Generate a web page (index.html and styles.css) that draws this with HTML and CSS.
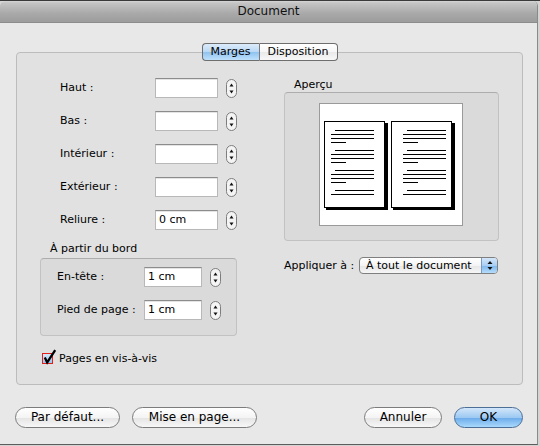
FILE: index.html
```html
<!DOCTYPE html>
<html lang="fr">
<head>
<meta charset="utf-8">
<title>Document</title>
<link rel="stylesheet" href="styles.css">
</head>
<body>
<div class="window">
  <div class="titlebar">Document</div>
  <div class="content">
    <div class="tabs">
      <span class="seg seg-on">Marges</span><span class="seg seg-off">Disposition</span>
    </div>
    <div class="tabbox">
      <div class="left">
        <div class="fields">
          <div class="row"><span class="lbl">Haut :</span><span class="field"></span><span class="stepper"><svg width="11" height="19" viewBox="0 0 11 19"><rect x="0.5" y="0.5" width="10" height="18" rx="5" class="st-bg"/><polygon points="3.5,7.5 7.5,7.5 5.5,4.5" fill="#111"/><polygon points="3.5,11.5 7.5,11.5 5.5,14.5" fill="#111"/></svg></span></div>
          <div class="row"><span class="lbl">Bas :</span><span class="field"></span><span class="stepper"><svg width="11" height="19" viewBox="0 0 11 19"><rect x="0.5" y="0.5" width="10" height="18" rx="5" class="st-bg"/><polygon points="3.5,7.5 7.5,7.5 5.5,4.5" fill="#111"/><polygon points="3.5,11.5 7.5,11.5 5.5,14.5" fill="#111"/></svg></span></div>
          <div class="row"><span class="lbl">Intérieur :</span><span class="field"></span><span class="stepper"><svg width="11" height="19" viewBox="0 0 11 19"><rect x="0.5" y="0.5" width="10" height="18" rx="5" class="st-bg"/><polygon points="3.5,7.5 7.5,7.5 5.5,4.5" fill="#111"/><polygon points="3.5,11.5 7.5,11.5 5.5,14.5" fill="#111"/></svg></span></div>
          <div class="row"><span class="lbl">Extérieur :</span><span class="field"></span><span class="stepper"><svg width="11" height="19" viewBox="0 0 11 19"><rect x="0.5" y="0.5" width="10" height="18" rx="5" class="st-bg"/><polygon points="3.5,7.5 7.5,7.5 5.5,4.5" fill="#111"/><polygon points="3.5,11.5 7.5,11.5 5.5,14.5" fill="#111"/></svg></span></div>
          <div class="row"><span class="lbl">Reliure :</span><span class="field">0 cm</span><span class="stepper"><svg width="11" height="19" viewBox="0 0 11 19"><rect x="0.5" y="0.5" width="10" height="18" rx="5" class="st-bg"/><polygon points="3.5,7.5 7.5,7.5 5.5,4.5" fill="#111"/><polygon points="3.5,11.5 7.5,11.5 5.5,14.5" fill="#111"/></svg></span></div>
        </div>
        <div class="grp-title">À partir du bord</div>
        <div class="group edge">
          <div class="row"><span class="lbl lbl-edge">En-tête :</span><span class="field field-edge">1 cm</span><span class="stepper"><svg width="11" height="19" viewBox="0 0 11 19"><rect x="0.5" y="0.5" width="10" height="18" rx="5" class="st-bg"/><polygon points="3.5,7.5 7.5,7.5 5.5,4.5" fill="#111"/><polygon points="3.5,11.5 7.5,11.5 5.5,14.5" fill="#111"/></svg></span></div>
          <div class="row"><span class="lbl lbl-edge">Pied de page :</span><span class="field field-edge">1 cm</span><span class="stepper"><svg width="11" height="19" viewBox="0 0 11 19"><rect x="0.5" y="0.5" width="10" height="18" rx="5" class="st-bg"/><polygon points="3.5,7.5 7.5,7.5 5.5,4.5" fill="#111"/><polygon points="3.5,11.5 7.5,11.5 5.5,14.5" fill="#111"/></svg></span></div>
        </div>
        <div class="check-row">
          <span class="checkbox"><svg class="checkmark" width="14" height="16" viewBox="0 0 14 16"><path d="M1.8 8.6 L4.2 13.4 L12.2 1.2" fill="none" stroke="#000" stroke-width="2.3" stroke-linejoin="miter"/></svg></span>
          <span class="check-lbl">Pages en vis-à-vis</span>
        </div>
      </div>
      <div class="right">
        <div class="grp-title">Aperçu</div>
        <div class="group preview-box">
          <svg class="preview" width="144" height="123" viewBox="0 0 144 123">
            <rect x="0.5" y="0.5" width="143" height="122" fill="#fff" stroke="#9a9a9a"/>
            <rect x="7" y="20" width="62" height="87" fill="#000"/>
            <rect x="5.5" y="18.5" width="60" height="86" fill="#fff" stroke="#000"/>
            <rect x="74" y="20" width="62" height="87" fill="#000"/>
            <rect x="72.5" y="18.5" width="60" height="86" fill="#fff" stroke="#000"/>
            <g stroke="#000" stroke-width="1">
              <path d="M16 27.5H55M12 31.5H55M12 35.5H55M12 39.5H27"/>
              <path d="M16 47.5H55M12 51.5H55M12 55.5H55M12 59.5H27"/>
              <path d="M16 67.5H55M12 71.5H55M12 75.5H55M12 79.5H27"/>
              <path d="M16 87.5H55M12 91.5H55"/>
              <path d="M88 27.5H127M84 31.5H127M84 35.5H127M84 39.5H99"/>
              <path d="M88 47.5H127M84 51.5H127M84 55.5H127M84 59.5H99"/>
              <path d="M88 67.5H127M84 71.5H127M84 75.5H127M84 79.5H99"/>
              <path d="M88 87.5H127M84 91.5H127"/>
            </g>
          </svg>
        </div>
        <div class="apply-row">
          <span class="apply-lbl">Appliquer à :</span>
          <span class="popup"><span class="popup-text">À tout le document</span><span class="popup-arrows"><svg width="16" height="15" viewBox="0 0 16 15"><polygon points="5.5,6 10.5,6 8,3" fill="#111"/><polygon points="5.5,9 10.5,9 8,12" fill="#111"/></svg></span></span>
        </div>
      </div>
    </div>
    <div class="buttons">
      <div class="btn-group">
        <span class="btn btn-default">Par défaut...</span>
        <span class="btn btn-page">Mise en page...</span>
      </div>
      <div class="btn-group">
        <span class="btn btn-cancel">Annuler</span>
        <span class="btn btn-ok">OK</span>
      </div>
    </div>
  </div>
</div>
</body>
</html>
```

FILE: styles.css
```css
* { box-sizing: border-box; }

html, body {
  margin: 0;
  padding: 0;
}

body {
  width: 540px;
  height: 446px;
  overflow: hidden;
  background: #d4d4d4;
  border-top: 1px solid #3a3a3a;
  font-family: "DejaVu Sans", "Liberation Sans", sans-serif;
  font-size: 11px;
  color: #000;
}

.window {
  width: 538px;
  height: 444px;
  background: #e8e8e8;
  border-right: 1px solid #8a8a8a;
  border-bottom: 1px solid #5c5c5c;
  border-radius: 5px 5px 0 0;
  overflow: hidden;
}

.titlebar {
  height: 22px;
  line-height: 21px;
  text-align: center;
  font-size: 12px;
  color: #111;
  background: linear-gradient(#d6d6d6 0px, #c4c4c4 2px, #a9a9a9 60%, #9c9c9c 100%);
  border-bottom: 1px solid #8c8c8c;
}

.content {
  padding: 20px 0 0 16px;
}

.tabs {
  position: relative;
  z-index: 1;
  width: 507px;
  height: 18px;
  display: flex;
  justify-content: center;
}

.seg {
  height: 18px;
  line-height: 16px;
  text-align: center;
  border: 1px solid #6e6e6e;
  font-size: 11px;
}

.seg-on {
  width: 57px;
  border-radius: 4px 0 0 4px;
  border-right: none;
  background: linear-gradient(#dcebfa, #b9d8f5 50%, #8fc2ef 51%, #bfe1fc);
}

.seg-off {
  width: 79px;
  border-radius: 0 4px 4px 0;
  border-left: 1px solid #7a7a7a;
  background: linear-gradient(#ffffff, #f6f6f6 50%, #e9e9e9 51%, #f8f8f8);
}

.tabbox {
  width: 507px;
  height: 333px;
  margin-top: -9px;
  border: 1px solid #bcbcbc;
  border-radius: 4px;
  background: #e1e1e1;
  display: flex;
  padding: 25px 0 0 23px;
}

.left {
  width: 244px;
}

.right {
  width: 215px;
}

.fields {
  padding-left: 20px;
  display: flex;
  flex-direction: column;
  gap: 13px;
}

.row {
  display: flex;
  align-items: center;
  height: 20px;
}

.lbl {
  width: 95px;
  line-height: 20px;
  white-space: nowrap;
}

.lbl-edge {
  width: 87px;
}

.field {
  width: 63px;
  height: 20px;
  background: #fff;
  border: 1px solid #b8b8b8;
  border-top-color: #8c8c8c;
  line-height: 18px;
  padding-left: 3px;
  box-shadow: inset 0 1px 0 #e4e4e4;
}

.field-edge {
  width: 58px;
}

.stepper {
  margin-left: 8px;
  width: 11px;
  height: 19px;
  display: block;
}

.stepper svg { display: block; }

.st-bg {
  fill: #f4f4f4;
  stroke: #7d7d7d;
}

.grp-title {
  line-height: 14px;
  height: 14px;
  padding-left: 10px;
  white-space: nowrap;
}

.left .grp-title {
  margin-top: 12px;
}

.group {
  border: 1px solid #c2c2c2;
  border-top-color: #adadad;
  border-radius: 4px;
  background: #dadada;
}

.edge {
  margin-top: 2px;
  width: 197px;
  height: 78px;
  padding: 8px 0 0 16px;
  display: flex;
  flex-direction: column;
  gap: 13px;
}

.check-row {
  margin-top: 17px;
  height: 11px;
  padding-left: 2px;
  display: flex;
  align-items: center;
}

.checkbox {
  position: relative;
  width: 11px;
  height: 11px;
  border: 1px solid #e0201a;
  background: linear-gradient(#d6e9fb, #93c5f0);
}

.checkmark {
  position: absolute;
  left: 0;
  top: -5px;
}

.check-lbl {
  margin-left: 6px;
  line-height: 14px;
  white-space: nowrap;
}

.preview-box {
  width: 215px;
  height: 149px;
  padding: 10px 0 0 34px;
}

.preview { display: block; }

.apply-row {
  margin-top: 16px;
  height: 17px;
  display: flex;
  align-items: center;
}

.apply-lbl {
  width: 75px;
  white-space: nowrap;
  line-height: 14px;
}

.popup {
  width: 139px;
  height: 17px;
  display: flex;
  border: 1px solid #7f7f7f;
  border-radius: 4px;
  overflow: hidden;
  background: linear-gradient(#ffffff, #f4f4f4 50%, #e6e6e6 51%, #f6f6f6);
}

.popup-text {
  flex: 1;
  line-height: 15px;
  padding-left: 6px;
  white-space: nowrap;
}

.popup-arrows {
  width: 16px;
  height: 15px;
  border-left: 1px solid #7a9bc0;
  background: linear-gradient(#d3e6f9, #a9cff3 50%, #7db6ec 51%, #b5dcfb);
}

.popup-arrows svg { display: block; }

.buttons {
  margin-top: 22px;
  margin-left: -1px;
  width: 508px;
  height: 21px;
  display: flex;
  justify-content: space-between;
}

.btn-group {
  display: flex;
  gap: 12px;
}

.btn {
  height: 21px;
  line-height: 19px;
  text-align: center;
  font-size: 12px;
  border: 1px solid #7c7c7c;
  border-radius: 11px;
  background: linear-gradient(#ffffff, #f4f4f4 50%, #e4e4e4 51%, #f7f7f7);
  white-space: nowrap;
}

.btn-default { width: 105px; }
.btn-page { width: 125px; }
.btn-cancel { width: 78px; }

.btn-ok {
  width: 69px;
  border-color: #4d6e97;
  background: linear-gradient(#d2e6fa, #9dc9f2 50%, #6aaaea 51%, #a9d9fc);
}
```
